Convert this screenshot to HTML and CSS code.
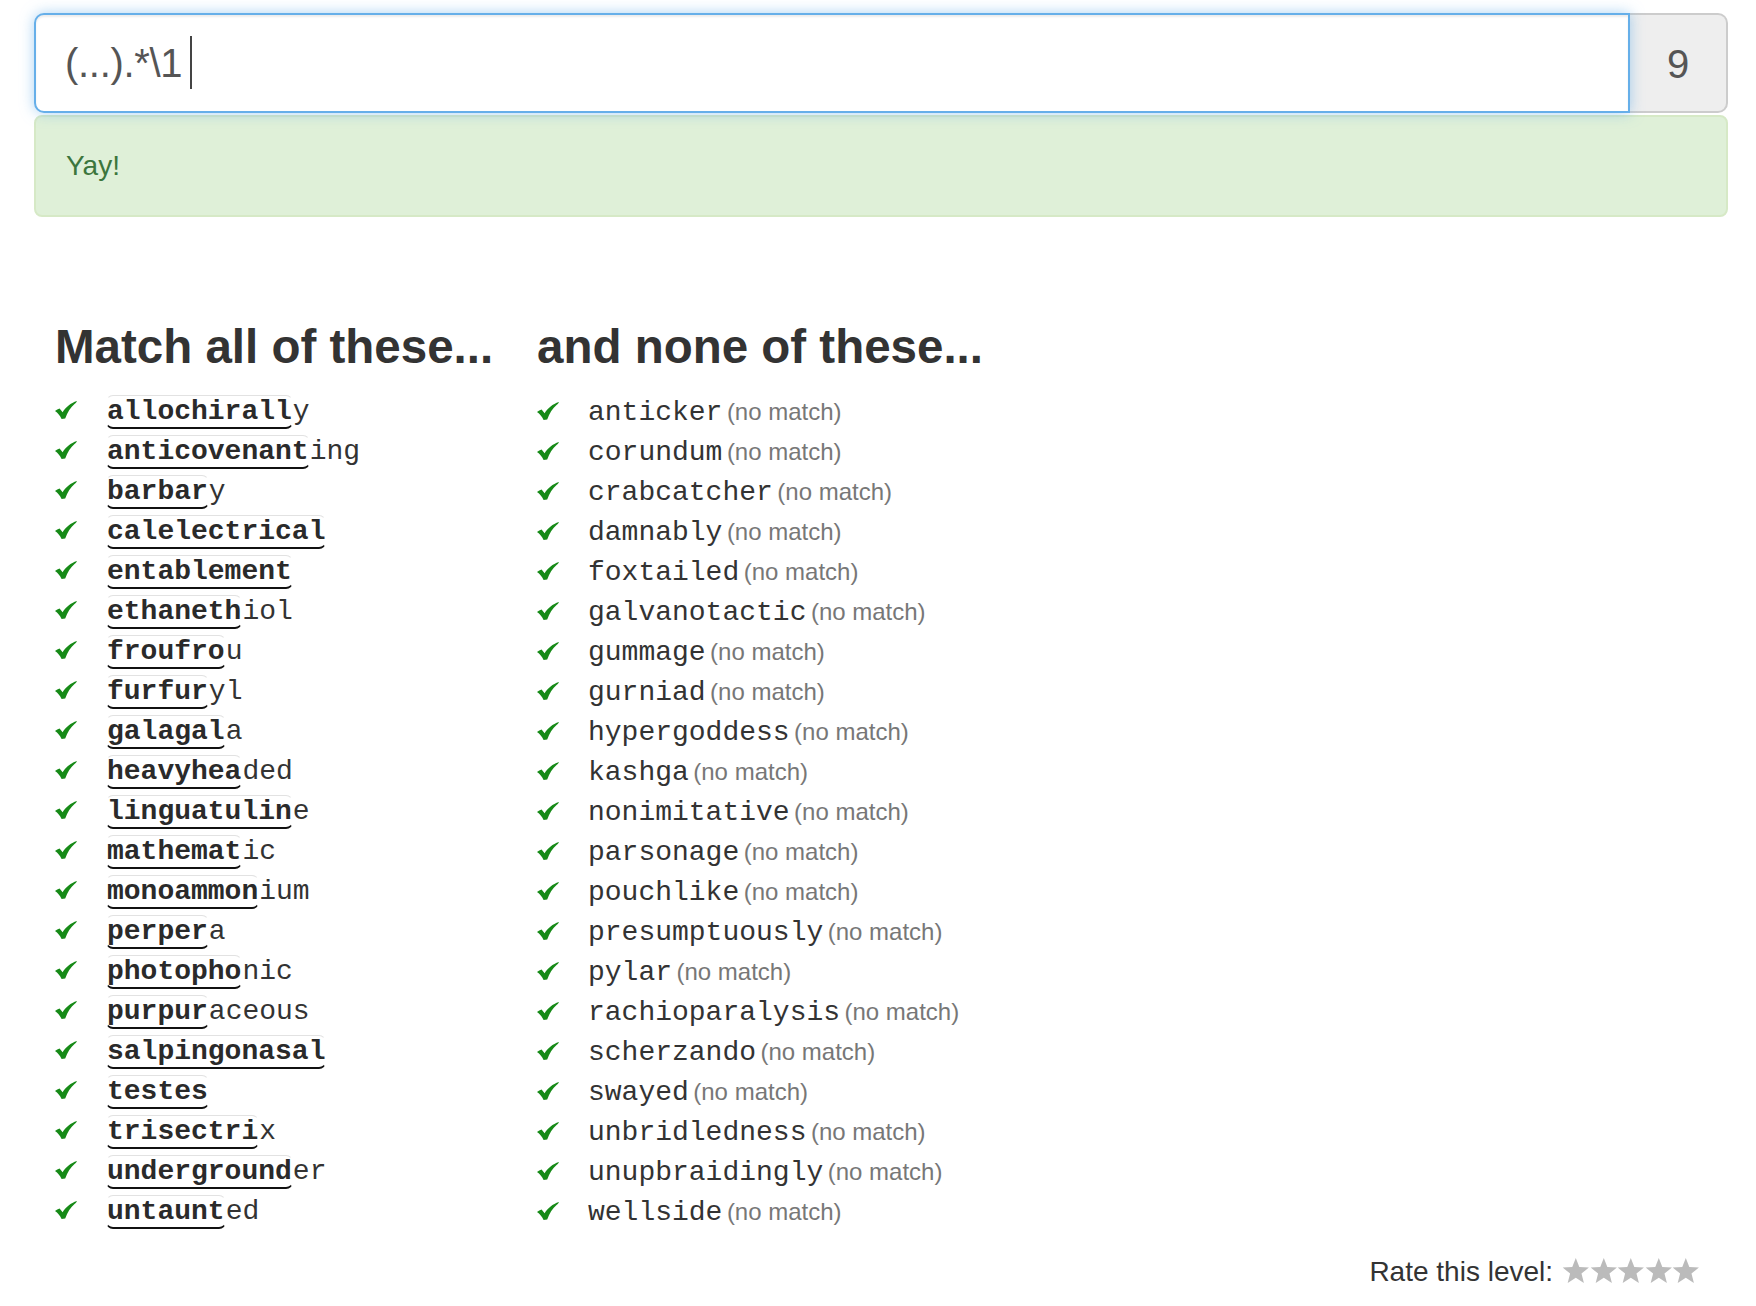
FILE: index.html
```html
<!DOCTYPE html>
<html>
<head>
<meta charset="utf-8">
<link rel="stylesheet" href="styles.css">
</head>
<body>
<div class="page">
  <div class="input-group">
    <div class="regex"><span class="regex-text">(...).*\1</span><span class="caret"></span></div>
    <div class="addon">9</div>
  </div>
  <div class="alert">Yay!</div>

  <div class="columns">
    <div class="col">
      <h2 class="heading">Match all of these...</h2>
      <ul class="words">
        <li><span class="check"><svg viewBox="0 0 22 18" width="22" height="18"><path d="M0 10 C1.5 8.6 3 7.8 4.6 7.4 L7.6 11.2 C11 6.2 15.5 2 22 0 C21.6 1.2 20.8 2 19.8 2.8 C15.5 6.5 12.6 11 10.2 17.6 L6.6 18 C5 14.6 2.8 12 0 10 Z"/></svg></span><span class="word"><span class="hit">allochirall</span>y</span></li>
        <li><span class="check"><svg viewBox="0 0 22 18" width="22" height="18"><path d="M0 10 C1.5 8.6 3 7.8 4.6 7.4 L7.6 11.2 C11 6.2 15.5 2 22 0 C21.6 1.2 20.8 2 19.8 2.8 C15.5 6.5 12.6 11 10.2 17.6 L6.6 18 C5 14.6 2.8 12 0 10 Z"/></svg></span><span class="word"><span class="hit">anticovenant</span>ing</span></li>
        <li><span class="check"><svg viewBox="0 0 22 18" width="22" height="18"><path d="M0 10 C1.5 8.6 3 7.8 4.6 7.4 L7.6 11.2 C11 6.2 15.5 2 22 0 C21.6 1.2 20.8 2 19.8 2.8 C15.5 6.5 12.6 11 10.2 17.6 L6.6 18 C5 14.6 2.8 12 0 10 Z"/></svg></span><span class="word"><span class="hit">barbar</span>y</span></li>
        <li><span class="check"><svg viewBox="0 0 22 18" width="22" height="18"><path d="M0 10 C1.5 8.6 3 7.8 4.6 7.4 L7.6 11.2 C11 6.2 15.5 2 22 0 C21.6 1.2 20.8 2 19.8 2.8 C15.5 6.5 12.6 11 10.2 17.6 L6.6 18 C5 14.6 2.8 12 0 10 Z"/></svg></span><span class="word"><span class="hit">calelectrical</span></span></li>
        <li><span class="check"><svg viewBox="0 0 22 18" width="22" height="18"><path d="M0 10 C1.5 8.6 3 7.8 4.6 7.4 L7.6 11.2 C11 6.2 15.5 2 22 0 C21.6 1.2 20.8 2 19.8 2.8 C15.5 6.5 12.6 11 10.2 17.6 L6.6 18 C5 14.6 2.8 12 0 10 Z"/></svg></span><span class="word"><span class="hit">entablement</span></span></li>
        <li><span class="check"><svg viewBox="0 0 22 18" width="22" height="18"><path d="M0 10 C1.5 8.6 3 7.8 4.6 7.4 L7.6 11.2 C11 6.2 15.5 2 22 0 C21.6 1.2 20.8 2 19.8 2.8 C15.5 6.5 12.6 11 10.2 17.6 L6.6 18 C5 14.6 2.8 12 0 10 Z"/></svg></span><span class="word"><span class="hit">ethaneth</span>iol</span></li>
        <li><span class="check"><svg viewBox="0 0 22 18" width="22" height="18"><path d="M0 10 C1.5 8.6 3 7.8 4.6 7.4 L7.6 11.2 C11 6.2 15.5 2 22 0 C21.6 1.2 20.8 2 19.8 2.8 C15.5 6.5 12.6 11 10.2 17.6 L6.6 18 C5 14.6 2.8 12 0 10 Z"/></svg></span><span class="word"><span class="hit">froufro</span>u</span></li>
        <li><span class="check"><svg viewBox="0 0 22 18" width="22" height="18"><path d="M0 10 C1.5 8.6 3 7.8 4.6 7.4 L7.6 11.2 C11 6.2 15.5 2 22 0 C21.6 1.2 20.8 2 19.8 2.8 C15.5 6.5 12.6 11 10.2 17.6 L6.6 18 C5 14.6 2.8 12 0 10 Z"/></svg></span><span class="word"><span class="hit">furfur</span>yl</span></li>
        <li><span class="check"><svg viewBox="0 0 22 18" width="22" height="18"><path d="M0 10 C1.5 8.6 3 7.8 4.6 7.4 L7.6 11.2 C11 6.2 15.5 2 22 0 C21.6 1.2 20.8 2 19.8 2.8 C15.5 6.5 12.6 11 10.2 17.6 L6.6 18 C5 14.6 2.8 12 0 10 Z"/></svg></span><span class="word"><span class="hit">galagal</span>a</span></li>
        <li><span class="check"><svg viewBox="0 0 22 18" width="22" height="18"><path d="M0 10 C1.5 8.6 3 7.8 4.6 7.4 L7.6 11.2 C11 6.2 15.5 2 22 0 C21.6 1.2 20.8 2 19.8 2.8 C15.5 6.5 12.6 11 10.2 17.6 L6.6 18 C5 14.6 2.8 12 0 10 Z"/></svg></span><span class="word"><span class="hit">heavyhea</span>ded</span></li>
        <li><span class="check"><svg viewBox="0 0 22 18" width="22" height="18"><path d="M0 10 C1.5 8.6 3 7.8 4.6 7.4 L7.6 11.2 C11 6.2 15.5 2 22 0 C21.6 1.2 20.8 2 19.8 2.8 C15.5 6.5 12.6 11 10.2 17.6 L6.6 18 C5 14.6 2.8 12 0 10 Z"/></svg></span><span class="word"><span class="hit">linguatulin</span>e</span></li>
        <li><span class="check"><svg viewBox="0 0 22 18" width="22" height="18"><path d="M0 10 C1.5 8.6 3 7.8 4.6 7.4 L7.6 11.2 C11 6.2 15.5 2 22 0 C21.6 1.2 20.8 2 19.8 2.8 C15.5 6.5 12.6 11 10.2 17.6 L6.6 18 C5 14.6 2.8 12 0 10 Z"/></svg></span><span class="word"><span class="hit">mathemat</span>ic</span></li>
        <li><span class="check"><svg viewBox="0 0 22 18" width="22" height="18"><path d="M0 10 C1.5 8.6 3 7.8 4.6 7.4 L7.6 11.2 C11 6.2 15.5 2 22 0 C21.6 1.2 20.8 2 19.8 2.8 C15.5 6.5 12.6 11 10.2 17.6 L6.6 18 C5 14.6 2.8 12 0 10 Z"/></svg></span><span class="word"><span class="hit">monoammon</span>ium</span></li>
        <li><span class="check"><svg viewBox="0 0 22 18" width="22" height="18"><path d="M0 10 C1.5 8.6 3 7.8 4.6 7.4 L7.6 11.2 C11 6.2 15.5 2 22 0 C21.6 1.2 20.8 2 19.8 2.8 C15.5 6.5 12.6 11 10.2 17.6 L6.6 18 C5 14.6 2.8 12 0 10 Z"/></svg></span><span class="word"><span class="hit">perper</span>a</span></li>
        <li><span class="check"><svg viewBox="0 0 22 18" width="22" height="18"><path d="M0 10 C1.5 8.6 3 7.8 4.6 7.4 L7.6 11.2 C11 6.2 15.5 2 22 0 C21.6 1.2 20.8 2 19.8 2.8 C15.5 6.5 12.6 11 10.2 17.6 L6.6 18 C5 14.6 2.8 12 0 10 Z"/></svg></span><span class="word"><span class="hit">photopho</span>nic</span></li>
        <li><span class="check"><svg viewBox="0 0 22 18" width="22" height="18"><path d="M0 10 C1.5 8.6 3 7.8 4.6 7.4 L7.6 11.2 C11 6.2 15.5 2 22 0 C21.6 1.2 20.8 2 19.8 2.8 C15.5 6.5 12.6 11 10.2 17.6 L6.6 18 C5 14.6 2.8 12 0 10 Z"/></svg></span><span class="word"><span class="hit">purpur</span>aceous</span></li>
        <li><span class="check"><svg viewBox="0 0 22 18" width="22" height="18"><path d="M0 10 C1.5 8.6 3 7.8 4.6 7.4 L7.6 11.2 C11 6.2 15.5 2 22 0 C21.6 1.2 20.8 2 19.8 2.8 C15.5 6.5 12.6 11 10.2 17.6 L6.6 18 C5 14.6 2.8 12 0 10 Z"/></svg></span><span class="word"><span class="hit">salpingonasal</span></span></li>
        <li><span class="check"><svg viewBox="0 0 22 18" width="22" height="18"><path d="M0 10 C1.5 8.6 3 7.8 4.6 7.4 L7.6 11.2 C11 6.2 15.5 2 22 0 C21.6 1.2 20.8 2 19.8 2.8 C15.5 6.5 12.6 11 10.2 17.6 L6.6 18 C5 14.6 2.8 12 0 10 Z"/></svg></span><span class="word"><span class="hit">testes</span></span></li>
        <li><span class="check"><svg viewBox="0 0 22 18" width="22" height="18"><path d="M0 10 C1.5 8.6 3 7.8 4.6 7.4 L7.6 11.2 C11 6.2 15.5 2 22 0 C21.6 1.2 20.8 2 19.8 2.8 C15.5 6.5 12.6 11 10.2 17.6 L6.6 18 C5 14.6 2.8 12 0 10 Z"/></svg></span><span class="word"><span class="hit">trisectri</span>x</span></li>
        <li><span class="check"><svg viewBox="0 0 22 18" width="22" height="18"><path d="M0 10 C1.5 8.6 3 7.8 4.6 7.4 L7.6 11.2 C11 6.2 15.5 2 22 0 C21.6 1.2 20.8 2 19.8 2.8 C15.5 6.5 12.6 11 10.2 17.6 L6.6 18 C5 14.6 2.8 12 0 10 Z"/></svg></span><span class="word"><span class="hit">underground</span>er</span></li>
        <li><span class="check"><svg viewBox="0 0 22 18" width="22" height="18"><path d="M0 10 C1.5 8.6 3 7.8 4.6 7.4 L7.6 11.2 C11 6.2 15.5 2 22 0 C21.6 1.2 20.8 2 19.8 2.8 C15.5 6.5 12.6 11 10.2 17.6 L6.6 18 C5 14.6 2.8 12 0 10 Z"/></svg></span><span class="word"><span class="hit">untaunt</span>ed</span></li>
      </ul>
    </div>
    <div class="col">
      <h2 class="heading">and none of these...</h2>
      <ul class="words">
        <li><span class="check"><svg viewBox="0 0 22 18" width="22" height="18"><path d="M0 10 C1.5 8.6 3 7.8 4.6 7.4 L7.6 11.2 C11 6.2 15.5 2 22 0 C21.6 1.2 20.8 2 19.8 2.8 C15.5 6.5 12.6 11 10.2 17.6 L6.6 18 C5 14.6 2.8 12 0 10 Z"/></svg></span><span class="word">anticker</span> <span class="nomatch">(no match)</span></li>
        <li><span class="check"><svg viewBox="0 0 22 18" width="22" height="18"><path d="M0 10 C1.5 8.6 3 7.8 4.6 7.4 L7.6 11.2 C11 6.2 15.5 2 22 0 C21.6 1.2 20.8 2 19.8 2.8 C15.5 6.5 12.6 11 10.2 17.6 L6.6 18 C5 14.6 2.8 12 0 10 Z"/></svg></span><span class="word">corundum</span> <span class="nomatch">(no match)</span></li>
        <li><span class="check"><svg viewBox="0 0 22 18" width="22" height="18"><path d="M0 10 C1.5 8.6 3 7.8 4.6 7.4 L7.6 11.2 C11 6.2 15.5 2 22 0 C21.6 1.2 20.8 2 19.8 2.8 C15.5 6.5 12.6 11 10.2 17.6 L6.6 18 C5 14.6 2.8 12 0 10 Z"/></svg></span><span class="word">crabcatcher</span> <span class="nomatch">(no match)</span></li>
        <li><span class="check"><svg viewBox="0 0 22 18" width="22" height="18"><path d="M0 10 C1.5 8.6 3 7.8 4.6 7.4 L7.6 11.2 C11 6.2 15.5 2 22 0 C21.6 1.2 20.8 2 19.8 2.8 C15.5 6.5 12.6 11 10.2 17.6 L6.6 18 C5 14.6 2.8 12 0 10 Z"/></svg></span><span class="word">damnably</span> <span class="nomatch">(no match)</span></li>
        <li><span class="check"><svg viewBox="0 0 22 18" width="22" height="18"><path d="M0 10 C1.5 8.6 3 7.8 4.6 7.4 L7.6 11.2 C11 6.2 15.5 2 22 0 C21.6 1.2 20.8 2 19.8 2.8 C15.5 6.5 12.6 11 10.2 17.6 L6.6 18 C5 14.6 2.8 12 0 10 Z"/></svg></span><span class="word">foxtailed</span> <span class="nomatch">(no match)</span></li>
        <li><span class="check"><svg viewBox="0 0 22 18" width="22" height="18"><path d="M0 10 C1.5 8.6 3 7.8 4.6 7.4 L7.6 11.2 C11 6.2 15.5 2 22 0 C21.6 1.2 20.8 2 19.8 2.8 C15.5 6.5 12.6 11 10.2 17.6 L6.6 18 C5 14.6 2.8 12 0 10 Z"/></svg></span><span class="word">galvanotactic</span> <span class="nomatch">(no match)</span></li>
        <li><span class="check"><svg viewBox="0 0 22 18" width="22" height="18"><path d="M0 10 C1.5 8.6 3 7.8 4.6 7.4 L7.6 11.2 C11 6.2 15.5 2 22 0 C21.6 1.2 20.8 2 19.8 2.8 C15.5 6.5 12.6 11 10.2 17.6 L6.6 18 C5 14.6 2.8 12 0 10 Z"/></svg></span><span class="word">gummage</span> <span class="nomatch">(no match)</span></li>
        <li><span class="check"><svg viewBox="0 0 22 18" width="22" height="18"><path d="M0 10 C1.5 8.6 3 7.8 4.6 7.4 L7.6 11.2 C11 6.2 15.5 2 22 0 C21.6 1.2 20.8 2 19.8 2.8 C15.5 6.5 12.6 11 10.2 17.6 L6.6 18 C5 14.6 2.8 12 0 10 Z"/></svg></span><span class="word">gurniad</span> <span class="nomatch">(no match)</span></li>
        <li><span class="check"><svg viewBox="0 0 22 18" width="22" height="18"><path d="M0 10 C1.5 8.6 3 7.8 4.6 7.4 L7.6 11.2 C11 6.2 15.5 2 22 0 C21.6 1.2 20.8 2 19.8 2.8 C15.5 6.5 12.6 11 10.2 17.6 L6.6 18 C5 14.6 2.8 12 0 10 Z"/></svg></span><span class="word">hypergoddess</span> <span class="nomatch">(no match)</span></li>
        <li><span class="check"><svg viewBox="0 0 22 18" width="22" height="18"><path d="M0 10 C1.5 8.6 3 7.8 4.6 7.4 L7.6 11.2 C11 6.2 15.5 2 22 0 C21.6 1.2 20.8 2 19.8 2.8 C15.5 6.5 12.6 11 10.2 17.6 L6.6 18 C5 14.6 2.8 12 0 10 Z"/></svg></span><span class="word">kashga</span> <span class="nomatch">(no match)</span></li>
        <li><span class="check"><svg viewBox="0 0 22 18" width="22" height="18"><path d="M0 10 C1.5 8.6 3 7.8 4.6 7.4 L7.6 11.2 C11 6.2 15.5 2 22 0 C21.6 1.2 20.8 2 19.8 2.8 C15.5 6.5 12.6 11 10.2 17.6 L6.6 18 C5 14.6 2.8 12 0 10 Z"/></svg></span><span class="word">nonimitative</span> <span class="nomatch">(no match)</span></li>
        <li><span class="check"><svg viewBox="0 0 22 18" width="22" height="18"><path d="M0 10 C1.5 8.6 3 7.8 4.6 7.4 L7.6 11.2 C11 6.2 15.5 2 22 0 C21.6 1.2 20.8 2 19.8 2.8 C15.5 6.5 12.6 11 10.2 17.6 L6.6 18 C5 14.6 2.8 12 0 10 Z"/></svg></span><span class="word">parsonage</span> <span class="nomatch">(no match)</span></li>
        <li><span class="check"><svg viewBox="0 0 22 18" width="22" height="18"><path d="M0 10 C1.5 8.6 3 7.8 4.6 7.4 L7.6 11.2 C11 6.2 15.5 2 22 0 C21.6 1.2 20.8 2 19.8 2.8 C15.5 6.5 12.6 11 10.2 17.6 L6.6 18 C5 14.6 2.8 12 0 10 Z"/></svg></span><span class="word">pouchlike</span> <span class="nomatch">(no match)</span></li>
        <li><span class="check"><svg viewBox="0 0 22 18" width="22" height="18"><path d="M0 10 C1.5 8.6 3 7.8 4.6 7.4 L7.6 11.2 C11 6.2 15.5 2 22 0 C21.6 1.2 20.8 2 19.8 2.8 C15.5 6.5 12.6 11 10.2 17.6 L6.6 18 C5 14.6 2.8 12 0 10 Z"/></svg></span><span class="word">presumptuously</span> <span class="nomatch">(no match)</span></li>
        <li><span class="check"><svg viewBox="0 0 22 18" width="22" height="18"><path d="M0 10 C1.5 8.6 3 7.8 4.6 7.4 L7.6 11.2 C11 6.2 15.5 2 22 0 C21.6 1.2 20.8 2 19.8 2.8 C15.5 6.5 12.6 11 10.2 17.6 L6.6 18 C5 14.6 2.8 12 0 10 Z"/></svg></span><span class="word">pylar</span> <span class="nomatch">(no match)</span></li>
        <li><span class="check"><svg viewBox="0 0 22 18" width="22" height="18"><path d="M0 10 C1.5 8.6 3 7.8 4.6 7.4 L7.6 11.2 C11 6.2 15.5 2 22 0 C21.6 1.2 20.8 2 19.8 2.8 C15.5 6.5 12.6 11 10.2 17.6 L6.6 18 C5 14.6 2.8 12 0 10 Z"/></svg></span><span class="word">rachioparalysis</span> <span class="nomatch">(no match)</span></li>
        <li><span class="check"><svg viewBox="0 0 22 18" width="22" height="18"><path d="M0 10 C1.5 8.6 3 7.8 4.6 7.4 L7.6 11.2 C11 6.2 15.5 2 22 0 C21.6 1.2 20.8 2 19.8 2.8 C15.5 6.5 12.6 11 10.2 17.6 L6.6 18 C5 14.6 2.8 12 0 10 Z"/></svg></span><span class="word">scherzando</span> <span class="nomatch">(no match)</span></li>
        <li><span class="check"><svg viewBox="0 0 22 18" width="22" height="18"><path d="M0 10 C1.5 8.6 3 7.8 4.6 7.4 L7.6 11.2 C11 6.2 15.5 2 22 0 C21.6 1.2 20.8 2 19.8 2.8 C15.5 6.5 12.6 11 10.2 17.6 L6.6 18 C5 14.6 2.8 12 0 10 Z"/></svg></span><span class="word">swayed</span> <span class="nomatch">(no match)</span></li>
        <li><span class="check"><svg viewBox="0 0 22 18" width="22" height="18"><path d="M0 10 C1.5 8.6 3 7.8 4.6 7.4 L7.6 11.2 C11 6.2 15.5 2 22 0 C21.6 1.2 20.8 2 19.8 2.8 C15.5 6.5 12.6 11 10.2 17.6 L6.6 18 C5 14.6 2.8 12 0 10 Z"/></svg></span><span class="word">unbridledness</span> <span class="nomatch">(no match)</span></li>
        <li><span class="check"><svg viewBox="0 0 22 18" width="22" height="18"><path d="M0 10 C1.5 8.6 3 7.8 4.6 7.4 L7.6 11.2 C11 6.2 15.5 2 22 0 C21.6 1.2 20.8 2 19.8 2.8 C15.5 6.5 12.6 11 10.2 17.6 L6.6 18 C5 14.6 2.8 12 0 10 Z"/></svg></span><span class="word">unupbraidingly</span> <span class="nomatch">(no match)</span></li>
        <li><span class="check"><svg viewBox="0 0 22 18" width="22" height="18"><path d="M0 10 C1.5 8.6 3 7.8 4.6 7.4 L7.6 11.2 C11 6.2 15.5 2 22 0 C21.6 1.2 20.8 2 19.8 2.8 C15.5 6.5 12.6 11 10.2 17.6 L6.6 18 C5 14.6 2.8 12 0 10 Z"/></svg></span><span class="word">wellside</span> <span class="nomatch">(no match)</span></li>
      </ul>
    </div>
  </div>

  <div class="rate">
    <span class="rate-label">Rate this level:</span>
    <span class="stars">
      <svg class="star" viewBox="0 0 24 23" width="27.6" height="27"><path d="M12 0.6 L15.06 8.39 L23.41 8.89 L16.95 14.21 L19.05 22.31 L12 17.8 L4.95 22.31 L7.05 14.21 L0.59 8.89 L8.94 8.39 Z"/></svg><svg class="star" viewBox="0 0 24 23" width="27.6" height="27"><path d="M12 0.6 L15.06 8.39 L23.41 8.89 L16.95 14.21 L19.05 22.31 L12 17.8 L4.95 22.31 L7.05 14.21 L0.59 8.89 L8.94 8.39 Z"/></svg><svg class="star" viewBox="0 0 24 23" width="27.6" height="27"><path d="M12 0.6 L15.06 8.39 L23.41 8.89 L16.95 14.21 L19.05 22.31 L12 17.8 L4.95 22.31 L7.05 14.21 L0.59 8.89 L8.94 8.39 Z"/></svg><svg class="star" viewBox="0 0 24 23" width="27.6" height="27"><path d="M12 0.6 L15.06 8.39 L23.41 8.89 L16.95 14.21 L19.05 22.31 L12 17.8 L4.95 22.31 L7.05 14.21 L0.59 8.89 L8.94 8.39 Z"/></svg><svg class="star" viewBox="0 0 24 23" width="27.6" height="27"><path d="M12 0.6 L15.06 8.39 L23.41 8.89 L16.95 14.21 L19.05 22.31 L12 17.8 L4.95 22.31 L7.05 14.21 L0.59 8.89 L8.94 8.39 Z"/></svg>
    </span>
  </div>
</div>
</body>
</html>
```

FILE: styles.css
```css
* { box-sizing: border-box; }

html, body {
  margin: 0;
  background: #fff;
}

body {
  font-family: "Liberation Sans", Arial, Helvetica, sans-serif;
  color: #333;
}

.page {
  padding: 13px 28px 0 34px;
}

/* regex input */
.input-group {
  display: flex;
  height: 100px;
}

.regex {
  flex: 1;
  display: flex;
  align-items: center;
  background: #fff;
  border: 2px solid #66afe9;
  border-radius: 10px 0 0 10px;
  box-shadow: inset 0 2px 2px rgba(0, 0, 0, 0.075), 0 0 14px rgba(102, 175, 233, 0.55);
  padding: 0 26px 0 29px;
  font-size: 40px;
  letter-spacing: -0.3px;
  color: #555;
  position: relative;
  z-index: 1;
}

.regex-text {
  line-height: 1;
}

.caret {
  display: inline-block;
  width: 0;
  height: 53px;
  border-left: 2px solid #444;
  margin-left: 8px;
  margin-top: -2px;
}

.addon {
  width: 98px;
  display: flex;
  align-items: center;
  justify-content: center;
  background: #eee;
  border: 2px solid #ccc;
  border-left: none;
  border-radius: 0 10px 10px 0;
  font-size: 40px;
  color: #555;
  padding-top: 2px;
}

/* success alert */
.alert {
  margin-top: 1.5px;
  height: 102.5px;
  background: #dff0d8;
  border: 2px solid #d6e9c6;
  border-radius: 8px;
  padding: 0 30px;
  color: #3c763d;
  font-size: 28px;
  line-height: 98px;
}

/* word columns */
.columns {
  display: grid;
  grid-template-columns: 482px auto;
  justify-content: start;
  margin-top: 104px;
  padding-left: 21px;
}

.heading {
  margin: 0;
  font-size: 47.5px;
  line-height: 52.8px;
  font-weight: bold;
  color: #333;
  white-space: nowrap;
}

.words {
  list-style: none;
  margin: 18px 0 0 0;
  padding: 0;
}

.words li {
  height: 40px;
  line-height: 40px;
  white-space: nowrap;
}

.check {
  display: inline-block;
  width: 51px;
}

.check svg {
  display: inline-block;
  vertical-align: 0;
  fill: #168a17;
}

.word {
  font-family: "Liberation Mono", "Courier New", monospace;
  font-size: 28px;
  color: #333;
}

.hit {
  font-weight: bold;
  color: #2a2a2a;
  border-top: 1px solid #e2e2e2;
  border-left: 1px solid transparent;
  border-right: 1px solid transparent;
  border-bottom: 2px solid #111;
  border-radius: 7px;
}

.nomatch {
  font-size: 24px;
  color: #777;
}

/* rating */
.rate {
  display: flex;
  justify-content: flex-end;
  align-items: baseline;
  margin-top: 20px;
  padding-right: 28px;
  font-size: 28px;
  line-height: 40px;
  color: #333;
}

.rate-label {
  margin-right: 9px;
}

.stars {
  display: inline-flex;
  align-self: center;
  margin-top: -2px;
}

.star {
  fill: #bbb;
  display: block;
}
```
